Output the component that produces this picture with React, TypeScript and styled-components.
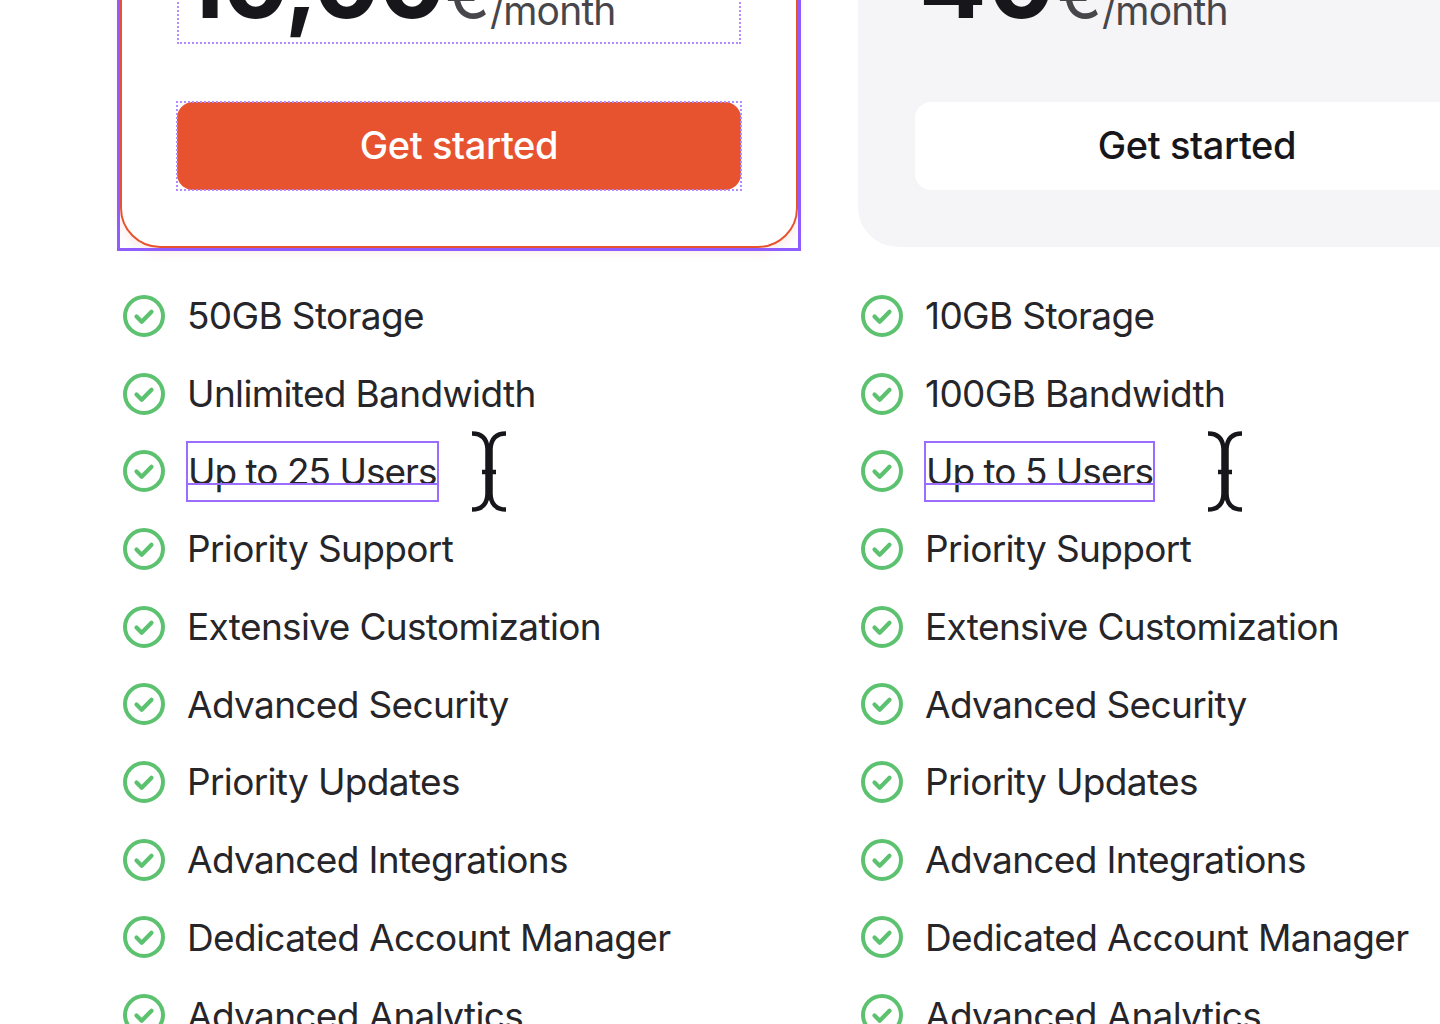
import React from 'react';
import styled, { createGlobalStyle } from 'styled-components';

const GlobalStyle = createGlobalStyle`
  html, body {
    margin: 0;
    padding: 0;
    background: #ffffff;
  }
  body {
    font-family: "Inter", "Liberation Sans", sans-serif;
    color: #1c1b1f;
  }
`;

type Plan = {
  price: string;
  highlighted?: boolean;
  priceTracking: number;
  cursorGap: number;
  features: string[];
};

const sharedFeatures = [
  'Priority Support',
  'Extensive Customization',
  'Advanced Security',
  'Priority Updates',
  'Advanced Integrations',
  'Dedicated Account Manager',
  'Advanced Analytics',
];

const plans: Plan[] = [
  {
    price: '10,00',
    highlighted: true,
    priceTracking: -2,
    cursorGap: 34,
    features: ['50GB Storage', 'Unlimited Bandwidth', 'Up to 25 Users', ...sharedFeatures],
  },
  {
    price: '40',
    priceTracking: 1,
    cursorGap: 54,
    features: ['10GB Storage', '100GB Bandwidth', 'Up to 5 Users', ...sharedFeatures],
  },
];

const CheckIcon = () => (
  <svg width="42" height="42" viewBox="0 0 42 42" fill="none">
    <circle cx="21" cy="21" r="19" stroke="#5cc270" strokeWidth="4" />
    <path d="M13.5 21.5l5.2 5.2 9.8-10" stroke="#5cc270" strokeWidth="4.2" strokeLinecap="round" strokeLinejoin="round" />
  </svg>
);

const TextCursor = ({ gap }: { gap: number }) => (
  <CursorWrap gap={gap}>
    <svg width="36" height="81" viewBox="0 0 36 81" fill="none">
      <path
        d="M1 2.5C10 2.5 16 7 16.5 18V63C16 74 10 78.5 1 78.5M35 2.5C26 2.5 20 7 19.5 18V63C20 74 26 78.5 35 78.5M11 41h14"
        stroke="#17161a"
        strokeWidth="4.5"
      />
    </svg>
  </CursorWrap>
);

export default function App() {
  return (
    <>
      <GlobalStyle />
      <Page>
        <Columns>
          {plans.map((plan) => (
            <Column key={plan.price}>
              <Card highlighted={plan.highlighted}>
                <PriceBox highlighted={plan.highlighted}>
                  <PriceLine>
                    <Amount tracking={plan.priceTracking}>{plan.price}</Amount>
                    <Currency>€</Currency>
                    <Period>/month</Period>
                  </PriceLine>
                </PriceBox>
                <CtaFrame highlighted={plan.highlighted}>
                  <Cta highlighted={plan.highlighted}>Get started</Cta>
                </CtaFrame>
              </Card>
              <FeatureList>
                {plan.features.map((feature, i) => (
                  <FeatureRow key={feature}>
                    <CheckIcon />
                    {i === 2 ? (
                      <SelectedLabel>
                        {feature}
                        <TextCursor gap={plan.cursorGap} />
                      </SelectedLabel>
                    ) : (
                      <Label>{feature}</Label>
                    )}
                  </FeatureRow>
                ))}
              </FeatureList>
            </Column>
          ))}
        </Columns>
      </Page>
    </>
  );
}

const Page = styled.div`
  width: 1440px;
  height: 1024px;
  overflow: hidden;
`;

const Columns = styled.div`
  display: grid;
  grid-template-columns: 678px 678px;
  column-gap: 60px;
  margin: -240px 0 0 120px;
  width: 1500px;
`;

const Column = styled.div`
  display: flex;
  flex-direction: column;
`;

const Card = styled.div<{ highlighted?: boolean }>`
  position: relative;
  box-sizing: border-box;
  height: ${({ highlighted }) => (highlighted ? '488px' : '487px')};
  margin-bottom: ${({ highlighted }) => (highlighted ? '-1px' : '0')};
  display: flex;
  flex-direction: column;
  justify-content: flex-end;
  padding: 0 55px ${({ highlighted }) => (highlighted ? '56px' : '55px')};
  border-radius: 0 0 40px 40px;
  background: ${({ highlighted }) => (highlighted ? '#ffffff' : '#f5f4f7')};
  border: 2px solid ${({ highlighted }) => (highlighted ? '#e8532f' : '#f5f4f7')};
  ${({ highlighted }) =>
    highlighted &&
    `
    box-shadow: 0 4px 12px rgba(232, 83, 47, 0.12);

    &::after {
      content: '';
      position: absolute;
      inset: -5px;
      border: 3px solid #8f5cff;
      pointer-events: none;
    }
  `}
`;

const PriceBox = styled.div<{ highlighted?: boolean }>`
  box-sizing: border-box;
  display: flex;
  align-items: flex-end;
  height: 90px;
  margin-bottom: 58px;
  padding: 0 2px 10px;
  white-space: nowrap;
  border: 2px dotted ${({ highlighted }) => (highlighted ? '#b48aff' : 'transparent')};
`;

const PriceLine = styled.div`
  font-size: 100px;
  line-height: 100px;
`;

const Amount = styled.span<{ tracking: number }>`
  font-size: 100px;
  font-weight: 700;
  letter-spacing: ${({ tracking }) => tracking}px;
  color: #17161a;
`;

const Currency = styled.span`
  font-size: 66px;
  font-weight: 400;
  line-height: 1;
  color: #47464b;
  margin-left: 2px;
`;

const Period = styled.span`
  font-size: 39px;
  font-weight: 400;
  line-height: 1;
  letter-spacing: -0.8px;
  color: #47464b;
  vertical-align: -7px;
`;

const CtaFrame = styled.div<{ highlighted?: boolean }>`
  ${({ highlighted }) => highlighted && 'outline: 2px dotted #b48aff; outline-offset: -1px;'}
`;

const Cta = styled.div<{ highlighted?: boolean }>`
  display: flex;
  align-items: center;
  justify-content: center;
  height: 88px;
  padding-bottom: 2px;
  border-radius: 16px;
  font-size: 38px;
  font-weight: 500;
  letter-spacing: -0.4px;
  box-sizing: border-box;
  background: ${({ highlighted }) => (highlighted ? '#e8532f' : '#ffffff')};
  color: ${({ highlighted }) => (highlighted ? '#ffffff' : '#17161a')};
`;

const FeatureList = styled.ul`
  list-style: none;
  margin: 30px 0 0;
  padding: 0 0 0 3px;
  display: flex;
  flex-direction: column;
`;

const FeatureRow = styled.li`
  display: flex;
  align-items: center;
  gap: 22px;
  height: 77.7px;
`;

const Label = styled.span`
  font-size: 37px;
  font-weight: 400;
  letter-spacing: -0.65px;
  color: #26252a;
  white-space: nowrap;
`;

const SelectedLabel = styled(Label)`
  position: relative;
  box-sizing: border-box;
  height: 61px;
  line-height: 57px;
  letter-spacing: -1px;
  margin-left: -1px;
  border: 2px solid #9b6dff;

  &::after {
    content: '';
    position: absolute;
    left: 0;
    right: 0;
    top: 40px;
    height: 2px;
    background: #9b6dff;
  }
`;

const CursorWrap = styled.span<{ gap: number }>`
  position: absolute;
  left: calc(100% + ${({ gap }) => gap}px);
  top: -12px;
  display: block;
  line-height: 0;
`;
